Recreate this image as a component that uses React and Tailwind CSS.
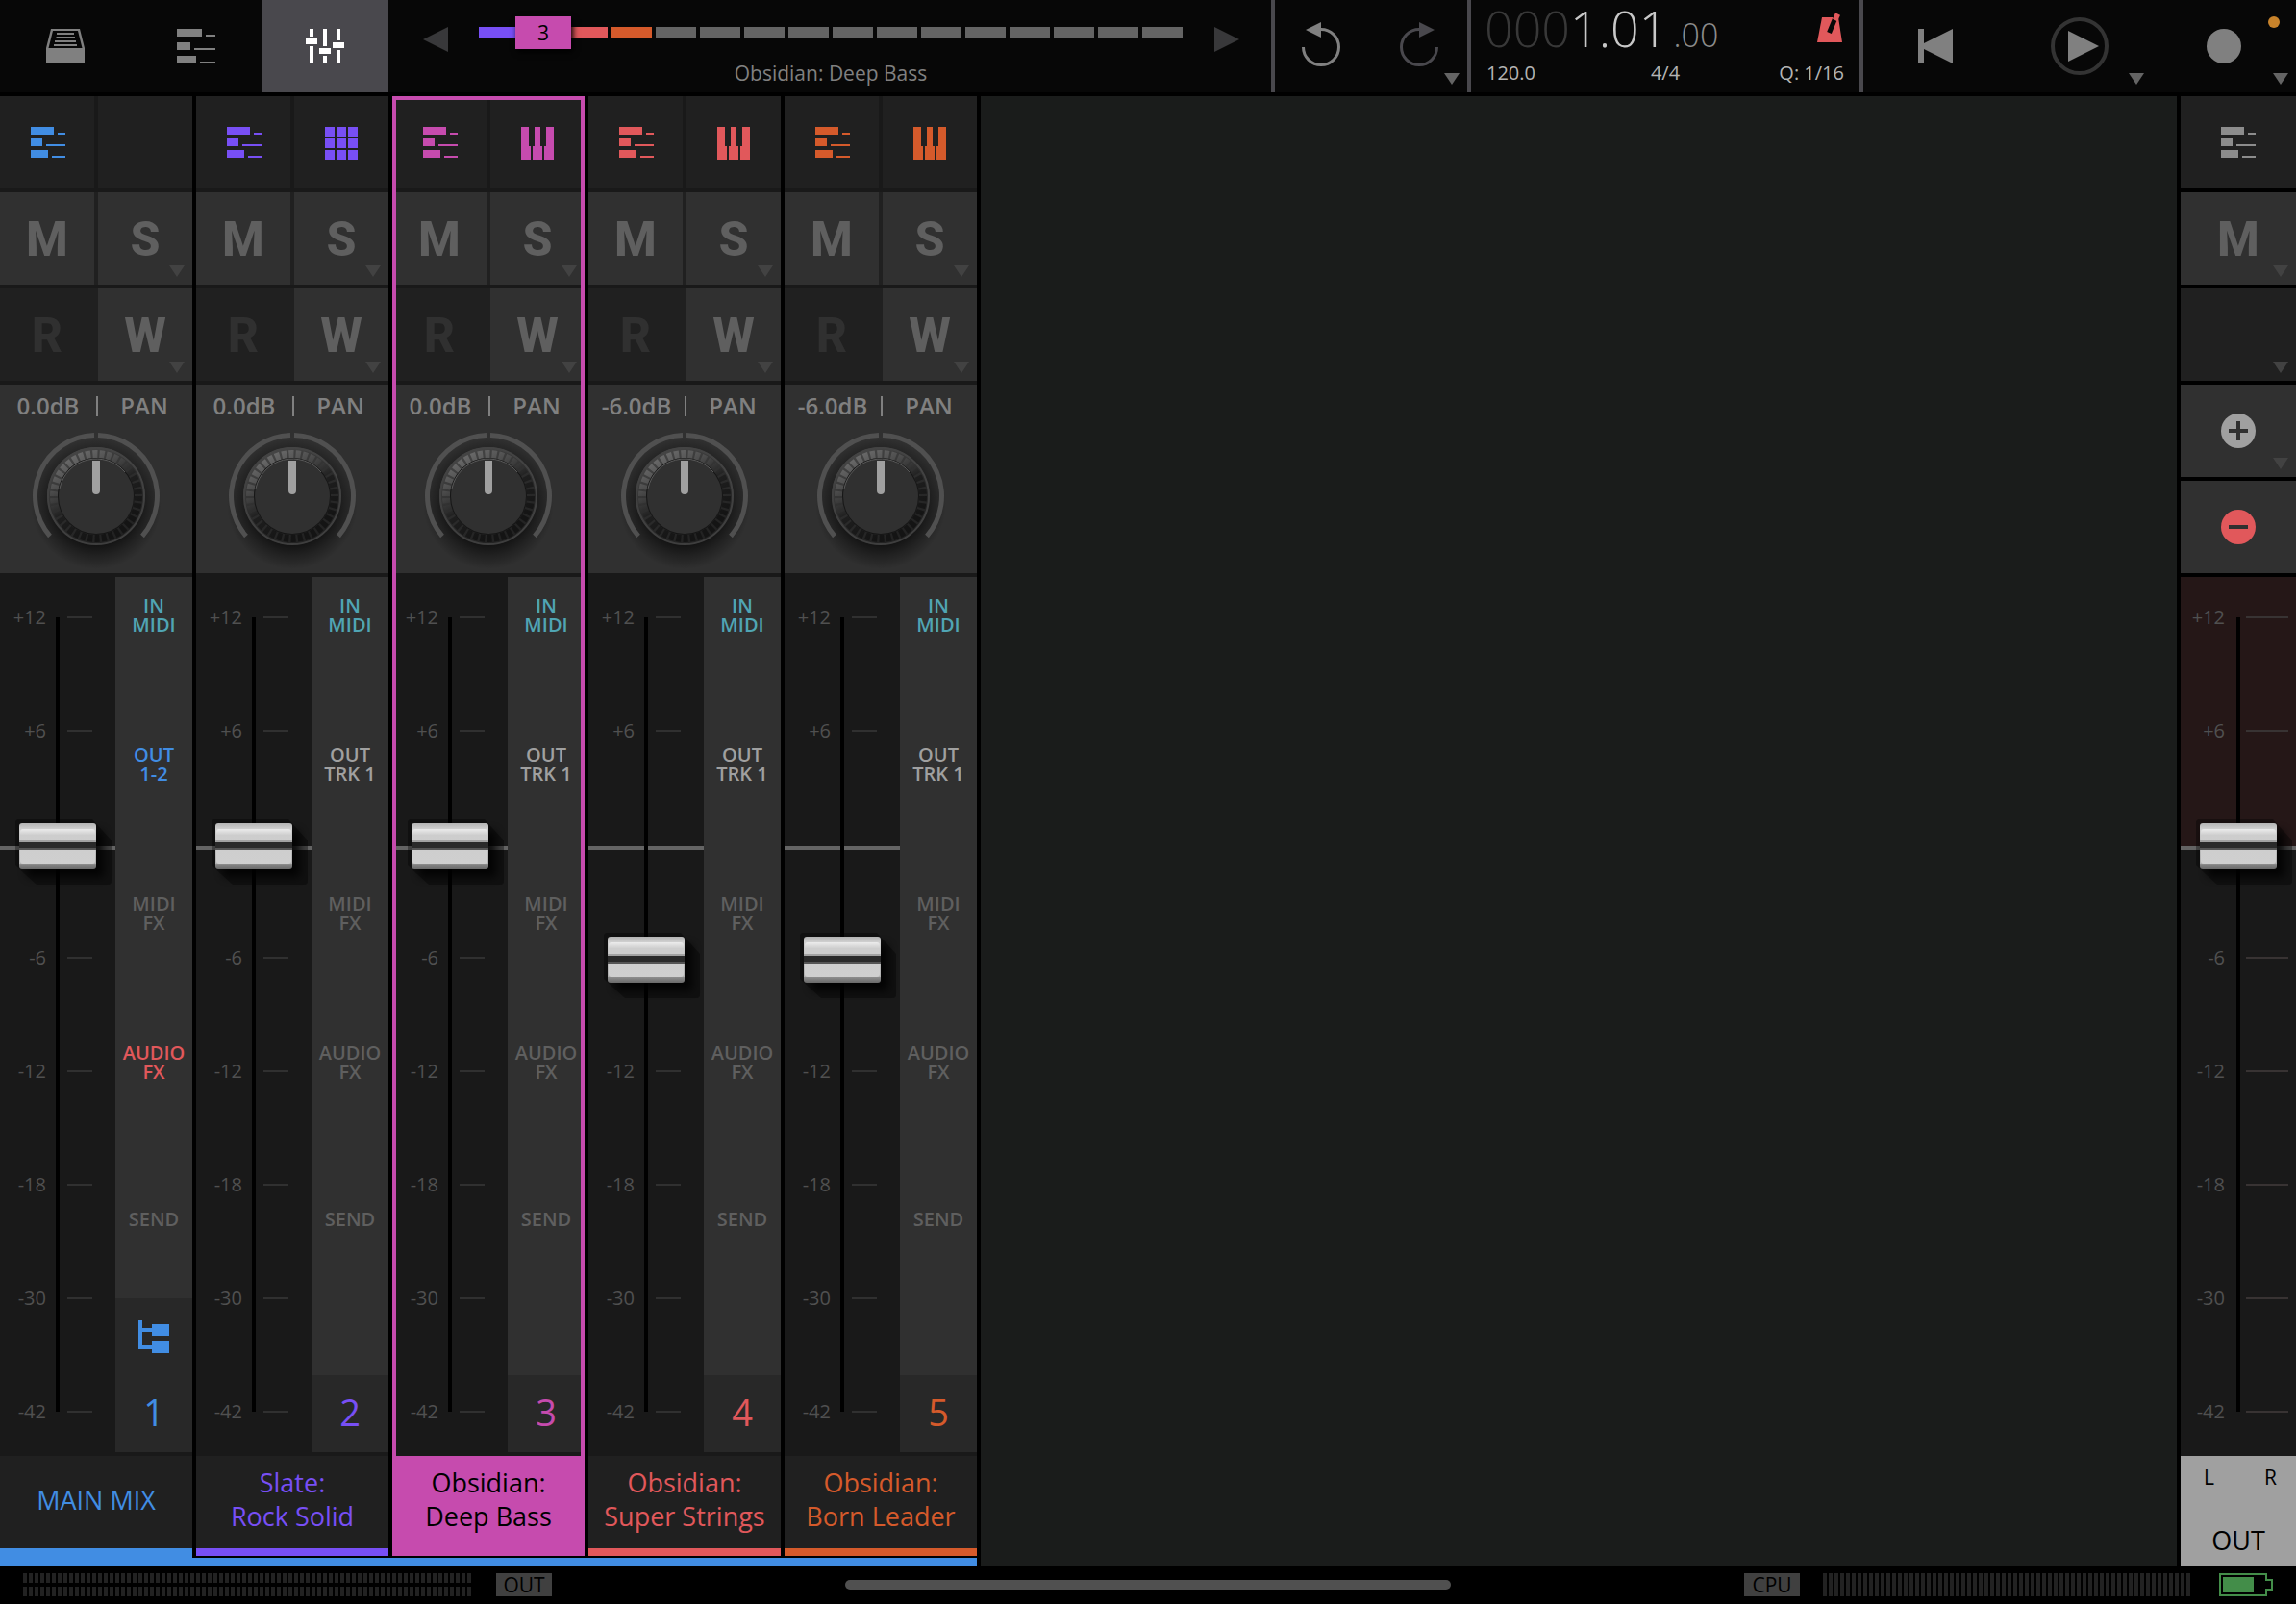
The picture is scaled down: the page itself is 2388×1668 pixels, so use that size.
import { useState } from "react";

const TRACKS = [
  {
    id: 1, name: ["MAIN MIX"], level: "0.0dB", travel: 238, group: true,
    text: "text-[#418de3]", bar: "bg-[#418de3]", instrument: null, out: "1-2", outTone: "text-[#418de3]", fxTone: "text-[#e1585b]",
  },
  {
    id: 2, name: ["Slate:", "Rock Solid"], level: "0.0dB", travel: 238,
    text: "text-[#784ff5]", bar: "bg-[#784ff5]", instrument: "pads", out: "TRK 1", outTone: "text-[#a0a0a0]", fxTone: "text-[#5f5f5f]",
  },
  {
    id: 3, name: ["Obsidian:", "Deep Bass"], level: "0.0dB", travel: 238, selected: true,
    text: "text-[#c64bae]", bar: "bg-[#c64bae]", instrument: "keys", out: "TRK 1", outTone: "text-[#a0a0a0]", fxTone: "text-[#5f5f5f]",
  },
  {
    id: 4, name: ["Obsidian:", "Super Strings"], level: "-6.0dB", travel: 356,
    text: "text-[#e1585b]", bar: "bg-[#e1585b]", instrument: "keys", out: "TRK 1", outTone: "text-[#a0a0a0]", fxTone: "text-[#5f5f5f]",
  },
  {
    id: 5, name: ["Obsidian:", "Born Leader"], level: "-6.0dB", travel: 356,
    text: "text-[#d55a2b]", bar: "bg-[#d55a2b]", instrument: "keys", out: "TRK 1", outTone: "text-[#a0a0a0]", fxTone: "text-[#5f5f5f]",
  },
];

const SCALE = ["+12", "+6", "0", "-6", "-12", "-18", "-30", "-42"];
const SLOTS = ["bg-[#784ff5]", "bg-[#c64bae]", "bg-[#e1585b]", "bg-[#d55a2b]", ...Array(12).fill("bg-[#646464]")];

/* ---------- icons ---------- */

function DrawerIcon() {
  return (
    <svg width="40" height="36" viewBox="0 0 40 36" fill="currentColor">
      <path d="M5 0H35L40 20V36H0V20ZM7 2L2.500 20H37.500L33 2Z" fillRule="evenodd" />
      <path d="M0 20H40V36H0ZM11 4H29V6H11ZM10.500 8H30V10H10.500ZM9 12H31V14H9ZM8 16H32V18H8Z" />
    </svg>
  );
}

function ArrangeIcon() {
  return (
    <svg width="40" height="36" viewBox="0 0 40 36" fill="currentColor" shapeRendering="crispEdges">
      <path d="M0 0H26V8H0ZM30 6H40V8H30ZM0 14H14V22H0ZM18 20H40V22H18ZM0 28H20V36H0ZM24 34H40V36H24Z" />
    </svg>
  );
}

function LanesIcon() {
  return (
    <svg width="36" height="32" viewBox="0 0 36 32" fill="currentColor" shapeRendering="crispEdges">
      <path d="M0 0H24V8H0ZM28 6H36V8H28ZM0 12H12V20H0ZM16 18H36V20H16ZM0 24H18V32H0ZM22 30H36V32H22Z" />
    </svg>
  );
}

function MixerIcon() {
  return (
    <svg width="40" height="36" viewBox="0 0 40 36" fill="currentColor" shapeRendering="crispEdges">
      <path d="M4 0H8V8H4ZM0 10H12V16H0ZM4 18H8V36H4ZM18 0H22V18H18ZM14 20H26V26H14ZM18 28H22V36H18ZM32 0H36V12H32ZM28 14H40V20H28ZM32 22H36V36H32Z" />
    </svg>
  );
}

function PadsIcon() {
  return (
    <svg width="34" height="34" viewBox="0 0 34 34" fill="currentColor" shapeRendering="crispEdges">
      {[0, 12, 24].map((y) => [0, 12, 24].map((x) => <rect key={`${x}-${y}`} x={x} y={y} width="10" height="10" />))}
    </svg>
  );
}

function KeysIcon() {
  return (
    <svg width="34" height="34" viewBox="0 0 34 34" fill="currentColor" shapeRendering="crispEdges">
      <path d="M0 0H8V20H10V34H0ZM14 0H20V20H22V34H12V20H14ZM26 0H34V34H24V20H26Z" />
    </svg>
  );
}

function GroupIcon() {
  return (
    <svg width="32" height="34" viewBox="0 0 32 34" fill="currentColor" shapeRendering="crispEdges">
      <path d="M0 0H4V8H14V4H32V16H14V12H4V26H14V22H32V34H14V30H0Z" />
    </svg>
  );
}

function UndoIcon({ flip }) {
  return (
    <svg width="40" height="46" viewBox="0 0 40 46" className={flip ? "-scale-x-100" : ""}>
      <path d="M1.500 26A18.500 18.500 0 1 0 20 7.500" fill="none" stroke="currentColor" strokeWidth="3" />
      <path d="M4 8L20 0V16Z" fill="currentColor" />
    </svg>
  );
}

function MetronomeIcon() {
  return (
    <svg width="26" height="30" viewBox="0 0 26 30">
      <path d="M5 4H22L26 30H0Z" fill="#e1585b" />
      <path d="M20 2L12.500 20" stroke="#070707" strokeWidth="5" />
      <path d="M21.500 0.500L18.500 7" stroke="#e1585b" strokeWidth="5.500" />
    </svg>
  );
}

function CornerArrow({ tone = "text-[#424242]" }) {
  return (
    <svg width="16" height="12" viewBox="0 0 16 12" className={`absolute right-2 bottom-2 ${tone}`}>
      <path d="M0 0H16L8 12Z" fill="currentColor" />
    </svg>
  );
}

function Knob() {
  return (
    <svg width="160" height="156" viewBox="-80 -70 160 156" className="block">
      <defs>
        <linearGradient id="ring" x1="0.2" y1="0" x2="0.700" y2="1">
          <stop offset="0" stopColor="#4a4a4a" />
          <stop offset="0.500" stopColor="#2c2c2c" />
          <stop offset="1" stopColor="#202020" />
        </linearGradient>
        <linearGradient id="ridge" x1="0.150" y1="0" x2="0.650" y2="0.900">
          <stop offset="0" stopColor="#707070" />
          <stop offset="0.300" stopColor="#4c4c4c" />
          <stop offset="0.600" stopColor="#1e1e1e" />
          <stop offset="1" stopColor="#141414" />
        </linearGradient>
        <linearGradient id="rim" x1="0" y1="0" x2="0" y2="1">
          <stop offset="0" stopColor="#444" />
          <stop offset="1" stopColor="#3e3e3e" />
        </linearGradient>
        <radialGradient id="drop">
          <stop offset="0.600" stopColor="#000" stopOpacity="0.650" />
          <stop offset="0.800" stopColor="#000" stopOpacity="0.300" />
          <stop offset="1" stopColor="#000" stopOpacity="0" />
        </radialGradient>
      </defs>
      <circle cx="0" cy="8" r="68" fill="url(#drop)" />
      <path d="M-2 -63.500A63.500 63.500 0 0 0 -48 41.500M2 -63.500A63.500 63.500 0 0 1 48 41.500" fill="none" stroke="#505050" strokeWidth="5" />
      <circle r="51" fill="url(#ring)" />
      <circle r="50" fill="none" stroke="url(#rim)" strokeWidth="2" />
      <circle r="44" fill="none" stroke="url(#ridge)" strokeWidth="8" pathLength="380" strokeDasharray="7 3" />
      <circle r="40" fill="#161616" />
      <circle r="39" fill="#303030" />
      <path d="M-38 -8A39 39 0 0 1 30 -25" fill="none" stroke="#5a5a5a" strokeWidth="1" />
      <path d="M-4 -37H4V-6A4 4 0 0 1 -4 -6Z" fill="#a0a0a0" />
    </svg>
  );
}

function FaderCap() {
  return (
    <svg width="80" height="48" viewBox="0 0 80 48" className="block overflow-visible">
      <defs>
        <linearGradient id="cap" x1="0" y1="0" x2="0" y2="1">
          <stop offset="0" stopColor="#b4b4b4" />
          <stop offset="0.120" stopColor="#cfcfcf" />
          <stop offset="0.870" stopColor="#b0b0b0" />
          <stop offset="0.880" stopColor="#8c8c8c" />
          <stop offset="1" stopColor="#6a6a6a" />
        </linearGradient>
        <linearGradient id="face" x1="0" y1="0" x2="0" y2="1">
          <stop offset="0" stopColor="#ececec" />
          <stop offset="0.180" stopColor="#cdcdcd" />
          <stop offset="1" stopColor="#cfcfcf" />
        </linearGradient>
        <filter id="soft" x="-30%" y="-30%" width="160%" height="170%">
          <feGaussianBlur stdDeviation="5" />
        </filter>
      </defs>
      <path d="M-4 -2L-2 -4H76L96 18V62L94 64H18L-4 44Z" fill="#000" opacity="0.350" />
      <rect x="8" y="8" width="80" height="48" rx="4" fill="#000" opacity="0.800" filter="url(#soft)" />
      <rect width="80" height="48" rx="3" fill="url(#cap)" />
      <rect x="1" y="6" width="78" height="36" rx="3" fill="url(#face)" />
      <rect y="18" width="80" height="2" fill="#a2a2a2" />
      <rect y="20" width="80" height="6" fill="#2a2a2a" />
      <rect y="26" width="80" height="2" fill="#555" />
    </svg>
  );
}

/* ---------- mixer parts ---------- */

function Fader({ label, travel, wide }) {
  const [value, setValue] = useState(826 - travel);
  return (
    <div className="relative h-[910px] w-[120px]">
      <div className="flex flex-col gap-[98px] pt-8">
        {SCALE.map((mark) =>
          mark === "0" ? (
            <div key={mark} className="flex h-5 items-end pb-1">
              <div className="h-1 w-full bg-[#646464]" />
            </div>
          ) : (
            <div key={mark} className="flex h-5 items-center">
              <span className={`text-right text-[20px] leading-5 text-[#505050] ${wide ? "w-[46px]" : "w-12"}`}>{mark}</span>
              <span className={`ml-[22px] h-0.5 ${wide ? "w-11 bg-[#383333]" : "w-[26px] bg-[#303030]"}`} />
            </div>
          )
        )}
      </div>
      <div className="absolute top-[42px] left-[58px] h-[826px] w-1 bg-black" />
      <div className="absolute left-5 z-10" style={{ top: 826 - value + 18 }}>
        <FaderCap />
      </div>
      <input
        type="range" min="0" max="826" value={value} aria-label={label}
        onChange={(e) => setValue(Number(e.target.value))}
        className="absolute inset-x-5 top-[18px] z-20 h-[874px] cursor-pointer opacity-0 [direction:rtl] [writing-mode:vertical-lr]"
      />
    </div>
  );
}

function Slot({ lines, tone, height = "h-10" }) {
  return (
    <button className={`w-full text-[20px] leading-5 font-semibold whitespace-nowrap ${height} ${tone}`}>
      {lines.map((line) => <span key={line} className="block">{line}</span>)}
    </button>
  );
}

function LetterButton({ children, dim, arrow, label }) {
  return (
    <button
      aria-label={label}
      className={`relative flex items-center justify-center pt-0.5 font-[Roboto] text-[50px] leading-none font-extrabold ${
        dim ? "bg-[#202020] text-[#303030]" : "bg-[#303030] text-[#5f5f5f]"
      }`}
    >
      {children}
      {arrow && <CornerArrow />}
    </button>
  );
}

function Strip({ track }) {
  const { id, name, text, bar, selected, group, instrument } = track;
  const full = name.join(" ");
  return (
    <section aria-label={full} className="relative flex w-[200px] shrink-0 flex-col bg-[#191919]">
      <div className={`grid h-24 grid-cols-2 gap-1 ${text}`}>
        <button aria-label="Track lanes" className="flex items-center justify-center bg-[#202020] pl-0.5"><LanesIcon /></button>
        <button aria-label="Instrument" className="flex items-center justify-center bg-[#202020] pt-0.5">
          {instrument === "pads" && <PadsIcon />}
          {instrument === "keys" && <KeysIcon />}
        </button>
      </div>
      <div className="mt-1 grid h-24 grid-cols-2 gap-1 bg-[#202020]">
        <LetterButton label="Mute">M</LetterButton>
        <LetterButton label="Solo" arrow>S</LetterButton>
      </div>
      <div className="mt-1 grid h-24 grid-cols-2 gap-1 bg-[#202020]">
        <LetterButton label="Read automation" dim>R</LetterButton>
        <LetterButton label="Write automation" arrow>W</LetterButton>
      </div>
      <div className="mt-1 flex h-[196px] flex-col items-center bg-[#303030]">
        <div className="relative grid w-full grid-cols-2 pt-2 text-center text-[24px] leading-7 font-semibold text-[#808080]">
          <span>{track.level}</span>
          <span>PAN</span>
          <span className="absolute top-3 left-1/2 h-[21px] w-0.5 bg-[#808080]" />
        </div>
        <label className="relative mt-2.5 block">
          <Knob />
          <input type="range" min="-50" max="50" defaultValue="0" aria-label={`${full} pan`} className="absolute inset-0 w-full cursor-pointer opacity-0" />
        </label>
      </div>
      <div className="mt-1 flex h-[910px]">
        <Fader label={`${full} level`} travel={track.travel} />
        <div className="flex w-20 flex-col bg-[#303030]">
          <div className="flex flex-1 flex-col gap-[115px] pt-5">
            <Slot lines={["IN", "MIDI"]} tone="text-[#50a5b4]" />
            <Slot lines={["OUT", track.out]} tone={track.outTone} />
            <Slot lines={["MIDI", "FX"]} tone="text-[#5f5f5f]" />
            <Slot lines={["AUDIO", "FX"]} tone={track.fxTone} />
            <Slot lines={["SEND"]} tone="text-[#5f5f5f]" height="h-14" />
          </div>
          <div className={`flex flex-col bg-[#282828] ${text}`}>
            {group && (
              <button aria-label="Show group" className="flex h-20 items-center justify-center"><GroupIcon /></button>
            )}
            <span className="flex h-20 items-center justify-center pb-1 text-[38px] leading-none">{id}</span>
          </div>
        </div>
      </div>
      <button
        className={`mt-1 flex h-24 flex-col items-center justify-center pb-1.5 text-[27px] leading-[35px] ${
          selected ? "bg-[#c64bae] text-black" : `bg-[#202020] ${text}`
        }`}
      >
        {name.map((line) => <span key={line}>{line}</span>)}
      </button>
      <div className={`${bar} ${group ? "h-2.5" : "h-2"}`} />
      {!group && <div className="h-0.5 bg-black" />}
      {selected && <div className="pointer-events-none absolute inset-x-0 top-0 bottom-0.5 z-20 border-4 border-[#c64bae]" />}
    </section>
  );
}

function Master() {
  return (
    <aside aria-label="Output" className="flex w-[124px] shrink-0 flex-col gap-1 border-l-4 border-black bg-black">
      <button aria-label="Output lanes" className="flex h-24 items-center justify-center bg-[#202020] text-[#8c8c8c]"><LanesIcon /></button>
      <div className="grid h-24"><LetterButton label="Mute output" arrow>M</LetterButton></div>
      <button aria-label="Output options" className="relative h-24 bg-[#202020]"><CornerArrow /></button>
      <button aria-label="Add track" className="relative flex h-24 items-center justify-center bg-[#303030]">
        <svg width="36" height="36" viewBox="0 0 36 36">
          <circle cx="18" cy="18" r="18" fill="#a0a0a0" />
          <path d="M8 18H28M18 8V28" stroke="#303030" strokeWidth="4" />
        </svg>
        <CornerArrow />
      </button>
      <button aria-label="Remove track" className="flex h-24 items-center justify-center bg-[#303030]">
        <svg width="36" height="36" viewBox="0 0 36 36">
          <circle cx="18" cy="18" r="18" fill="#e1585b" />
          <path d="M8 18H28" stroke="#303030" strokeWidth="4" />
        </svg>
      </button>
      <div className="flex flex-1 flex-col">
        <div className="h-[914px] bg-[linear-gradient(#251717_280px,#191919_280px)]">
          <Fader label="Output level" travel={238} wide />
        </div>
        <div className="flex flex-1 flex-col justify-between bg-[#a0a0a0] pt-2.5 pb-2.5 text-center text-black">
          <div className="flex justify-between pr-5 pl-6 text-[21px] leading-6"><span>L</span><span>R</span></div>
          <div className="text-[27px] leading-8">OUT</div>
        </div>
      </div>
    </aside>
  );
}

/* ---------- bars ---------- */

function Header() {
  return (
    <header className="flex h-24 bg-[#070707]">
      <nav className="flex text-[#808080]">
        <button aria-label="Library" className="flex w-[136px] items-center justify-center"><DrawerIcon /></button>
        <button aria-label="Timeline" className="flex w-[136px] items-center justify-center"><ArrangeIcon /></button>
        <button aria-label="Mixer" aria-pressed="true" className="flex w-[132px] items-center justify-center bg-[#49484d] text-white"><MixerIcon /></button>
      </nav>

      <div className="flex flex-1">
        <button aria-label="Previous track" className="flex w-[94px] justify-center pt-7 pl-1 text-[#38383a]">
          <svg width="26" height="26" viewBox="0 0 26 26"><path d="M26 0V26L0 13Z" fill="currentColor" /></svg>
        </button>
        <div className="flex flex-1 flex-col pt-[17px]">
          <div className="flex h-[34px] items-center gap-1">
            {SLOTS.map((tone, i) => (
              <div key={i} className={`relative h-3 flex-1 ${tone}`}>
                {i === 1 && (
                  <span className="absolute -inset-x-2 -inset-y-[11px] z-10 flex items-center justify-center bg-[#c64bae] text-[21px] leading-none text-black shadow-[2px_3px_6px_#000]">3</span>
                )}
              </div>
            ))}
          </div>
          <p className="mt-[15px] text-center text-[21px] leading-5 text-[#808080]">Obsidian: Deep Bass</p>
        </div>
        <button aria-label="Next track" className="flex w-[92px] justify-center pt-7 text-[#38383a]">
          <svg width="26" height="26" viewBox="0 0 26 26"><path d="M0 0V26L26 13Z" fill="currentColor" /></svg>
        </button>
      </div>

      <div className="grid w-[204px] grid-cols-2 border-l-4 border-[#49484d]">
        <button aria-label="Undo" className="flex items-center justify-center pr-1 pb-1 text-[#808080]"><UndoIcon /></button>
        <button aria-label="Redo" className="relative flex items-center justify-center pb-1 text-[#49484d]">
          <UndoIcon flip />
          <CornerArrow tone="text-[#646464]" />
        </button>
      </div>

      <div className="flex w-[412px] flex-col border-x-4 border-[#49484d] px-4 pt-1">
        <div className="flex h-[50px] justify-between">
          <div className="-ml-0.5 text-[52px] leading-[50px] font-light whitespace-nowrap text-[#c8c8c8]">
            <span className="text-[#383838]">000</span>1.01<span className="ml-1.5 text-[34px] leading-none text-[#8c8c8c]">.00</span>
          </div>
          <button aria-label="Metronome" className="flex items-start pt-2.5 pr-0.5"><MetronomeIcon /></button>
        </div>
        <div className="mt-3 grid grid-cols-3 text-[20px] leading-5 text-[#b4b4b4]">
          <button className="text-left">120.0</button>
          <button className="text-center">4/4</button>
          <button className="text-right">Q: 1/16</button>
        </div>
      </div>

      <div className="grid w-[450px] grid-cols-3 text-[#808080]">
        <button aria-label="Rewind" className="flex items-center justify-center">
          <svg width="36" height="36" viewBox="0 0 36 36" fill="currentColor"><path d="M0 0H6V15L36 0V36L6 21V36H0Z" /></svg>
        </button>
        <button aria-label="Play" className="relative flex items-center justify-center">
          <svg width="60" height="60" viewBox="0 0 60 60">
            <circle cx="30" cy="30" r="28" fill="none" stroke="#333333" strokeWidth="4" />
            <path d="M18 14L50 30L18 46Z" fill="currentColor" />
          </svg>
          <CornerArrow tone="text-[#646464]" />
        </button>
        <button aria-label="Record" className="relative flex items-center justify-center">
          <span className="size-9 rounded-full bg-current" />
          <span className="absolute top-[17px] right-[17px] size-3 rounded-full bg-[#c8832b]" />
          <CornerArrow tone="text-[#646464]" />
        </button>
      </div>
    </header>
  );
}

function Footer() {
  return (
    <footer className="flex h-10 items-center bg-black px-6">
      <div className="flex flex-1 items-center gap-[26px]">
        <div className="flex w-[466px] flex-col gap-1">
          <div className="h-2.5 bg-[repeating-linear-gradient(90deg,#222222_0_4px,transparent_4px_6px)]" />
          <div className="h-2.5 bg-[repeating-linear-gradient(90deg,#222222_0_4px,transparent_4px_6px)]" />
        </div>
        <span className="flex h-6 w-[58px] items-center justify-center bg-[#404040] text-[21px] leading-6 text-black">OUT</span>
      </div>
      <div className="h-2.5 w-[630px] rounded-full bg-[#505050]" />
      <div className="flex flex-1 items-center justify-end">
        <span className="flex h-6 w-[58px] items-center justify-center bg-[#404040] text-[21px] leading-6 text-black">CPU</span>
        <div className="mr-[30px] ml-6 h-6 w-[382px] bg-[repeating-linear-gradient(90deg,#222222_0_4px,transparent_4px_6px)]" />
        <svg width="56" height="24" viewBox="0 0 56 24" role="img" aria-label="Battery">
          <path d="M1 1H49V7H55V17H49V23H1Z" fill="none" stroke="#438d49" strokeWidth="2" />
          <rect x="4" y="4" width="32" height="16" fill="#438d49" />
        </svg>
      </div>
    </footer>
  );
}

export default function App() {
  return (
    <div className="flex min-h-screen flex-col bg-black font-['Open_Sans',sans-serif]">
      <Header />
      <main className="mt-1 flex flex-1">
        <div className="flex shrink-0 flex-col">
          <div className="flex gap-1">
            {TRACKS.map((track) => <Strip key={track.id} track={track} />)}
          </div>
          <div className="h-2 bg-[#418de3]" />
        </div>
        <div className="ml-1 flex-1 bg-[#1a1c1b]" />
        <Master />
      </main>
      <Footer />
    </div>
  );
}
